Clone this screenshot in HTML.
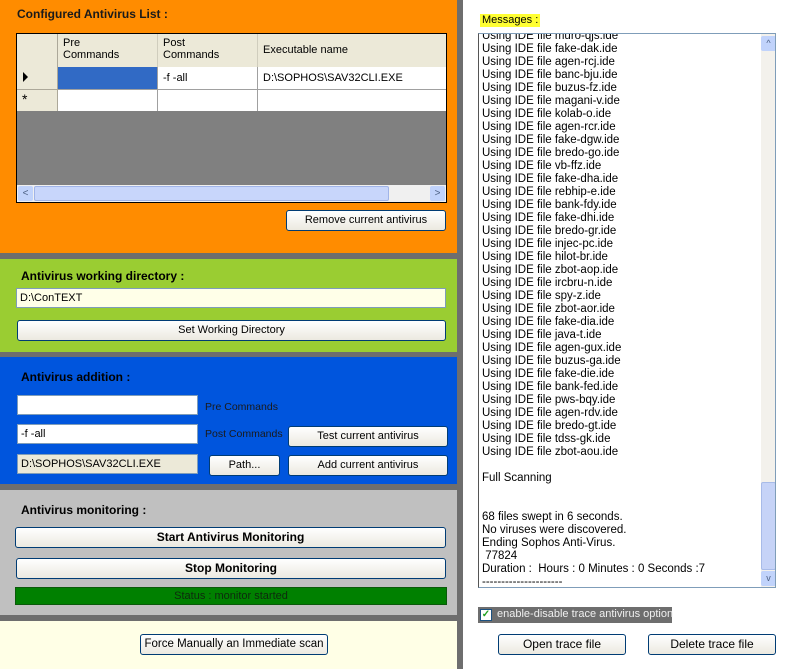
<!DOCTYPE html><html><head><style>
*{box-sizing:border-box;margin:0;padding:0}
body{width:793px;height:669px;position:relative;overflow:hidden;background:#fff;font-family:"Liberation Sans",sans-serif;font-size:11px;color:#000}
.a{position:absolute;white-space:nowrap}
.btn{position:absolute;background:linear-gradient(#fff,#ece9e0);border:1px solid #003c74;border-radius:3px;text-align:center;font-size:11px;line-height:18px;white-space:nowrap}
.b{font-weight:bold}
.tb{position:absolute;background:#fff;border:1px solid #7f9db9;font-size:11px;line-height:17px;padding-left:3px}
.ln{position:absolute;left:3px;font-size:11.5px;line-height:13px;white-space:nowrap}
</style></head><body>
<div class="a" style="left:0;top:0;width:463px;height:669px;background:#6e6e6e"></div>
<div class="a" style="left:0;top:0;width:457px;height:253px;background:#ff8c00"></div>
<div class="a b" style="left:17px;top:7px;font-size:12px;color:#1a1a1a">Configured Antivirus List :</div>
<div class="a" style="left:16px;top:33px;width:431px;height:170px;background:#808080;border:1px solid #000"></div>
<div class="a" style="left:17px;top:34px;width:429px;height:33px;background:#ece9d8"></div>
<div class="a" style="left:17px;top:34px;width:41px;height:77px;background:#ece9d8;border-right:1px solid #aca899"></div>
<div class="a" style="left:63px;top:37px;line-height:12px">Pre<br>Commands</div>
<div class="a" style="left:157px;top:34px;width:1px;height:33px;background:#d0cdbd"></div>
<div class="a" style="left:163px;top:37px;line-height:12px">Post<br>Commands</div>
<div class="a" style="left:257px;top:34px;width:1px;height:33px;background:#d0cdbd"></div>
<div class="a" style="left:263px;top:44px">Executable name</div>
<div class="a" style="left:58px;top:67px;width:388px;height:44px;background:#fff"></div>
<div class="a" style="left:58px;top:67px;width:99px;height:22px;background:#316ac5"></div>
<div class="a" style="left:58px;top:89px;width:388px;height:1px;background:#a0a0a0"></div>
<div class="a" style="left:157px;top:67px;width:1px;height:44px;background:#a0a0a0"></div>
<div class="a" style="left:257px;top:67px;width:1px;height:44px;background:#a0a0a0"></div>
<div class="a" style="left:17px;top:89px;width:41px;height:1px;background:#aca899"></div>
<div class="a" style="left:23px;top:72px;width:0;height:0;border-left:5px solid #000;border-top:5px solid transparent;border-bottom:5px solid transparent"></div>
<div class="a" style="left:22px;top:91px;font-size:14px">*</div>
<div class="a" style="left:163px;top:72px">-f -all</div>
<div class="a" style="left:263px;top:72px">D:\SOPHOS\SAV32CLI.EXE</div>
<div class="a" style="left:17px;top:185px;width:429px;height:17px;background:#f0f0f0"></div>
<div class="a" style="left:18px;top:186px;width:15px;height:15px;background:#c1d3fb;border-radius:2px;color:#4d6185;font-size:10px;text-align:center;line-height:15px">&lt;</div>
<div class="a" style="left:34px;top:186px;width:355px;height:15px;background:#c8d6fb;border:1px solid #a0b4e8;border-radius:2px"></div>
<div class="a" style="left:430px;top:186px;width:15px;height:15px;background:#c1d3fb;border-radius:2px;color:#4d6185;font-size:10px;text-align:center;line-height:15px">&gt;</div>
<div class="btn" style="left:286px;top:210px;width:160px;height:21px">Remove current antivirus</div>

<div class="a" style="left:0;top:259px;width:457px;height:93px;background:#9acd32"></div>
<div class="a b" style="left:21px;top:269px;font-size:12px">Antivirus working directory :</div>
<div class="tb" style="left:16px;top:288px;width:430px;height:20px;background:#ffffe8;line-height:18px">D:\ConTEXT</div>
<div class="btn" style="left:17px;top:320px;width:429px;height:21px">Set Working Directory</div>

<div class="a" style="left:0;top:357px;width:457px;height:127px;background:#0055dd"></div>
<div class="a b" style="left:21px;top:370px;font-size:12px">Antivirus addition :</div>
<div class="tb" style="left:17px;top:395px;width:181px;height:20px"></div>
<div class="a" style="left:205px;top:401px;color:#1a1a1a;font-size:10.5px">Pre Commands</div>
<div class="tb" style="left:17px;top:424px;width:181px;height:20px;line-height:19px">-f -all</div>
<div class="a" style="left:205px;top:428px;color:#1a1a1a;font-size:10.5px">Post Commands</div>
<div class="btn" style="left:288px;top:426px;width:160px;height:21px">Test current antivirus</div>
<div class="tb" style="left:17px;top:454px;width:181px;height:20px;background:#ece9d8;line-height:19px">D:\SOPHOS\SAV32CLI.EXE</div>
<div class="btn" style="left:209px;top:455px;width:71px;height:21px">Path...</div>
<div class="btn" style="left:288px;top:455px;width:160px;height:21px">Add current antivirus</div>

<div class="a" style="left:0;top:490px;width:457px;height:125px;background:#c0c0c0"></div>
<div class="a b" style="left:21px;top:503px;font-size:12px">Antivirus monitoring :</div>
<div class="btn b" style="left:15px;top:527px;width:431px;height:21px;font-size:12px">Start Antivirus Monitoring</div>
<div class="btn b" style="left:16px;top:558px;width:430px;height:21px;font-size:12px">Stop Monitoring</div>
<div class="a" style="left:15px;top:587px;width:432px;height:18px;background:#008000;border:1px solid #0a5a0a;text-align:center;line-height:16px;color:#0d2a0d">Status : monitor started</div>

<div class="a" style="left:0;top:621px;width:457px;height:48px;background:#ffffe6"></div>
<div class="btn" style="left:140px;top:634px;width:188px;height:21px;font-size:11.5px">Force Manually an Immediate scan</div>

<div class="a" style="left:480px;top:14px;background:#ffff33;padding:0 2px;line-height:13px">Messages :</div>
<div class="a" style="left:478px;top:33px;width:298px;height:555px;border:1px solid #7f9db9;border-left-color:#555;overflow:hidden;background:#fff">
<div id="m"></div>
<div class="a" style="left:282px;top:0;width:15px;height:553px;background:#f3f1ec"></div>
<div class="a" style="left:282px;top:2px;width:15px;height:15px;background:#c1d3fb;border-radius:2px;color:#4d6185;font-size:9px;text-align:center;line-height:15px">^</div>
<div class="a" style="left:282px;top:448px;width:15px;height:88px;background:#c6d3f7;border:1px solid #a8bbe8;border-radius:2px"></div>
<div class="a" style="left:282px;top:537px;width:15px;height:15px;background:#c1d3fb;border-radius:2px;color:#4d6185;font-size:9px;text-align:center;line-height:15px">v</div>
</div>
<div class="a" style="left:478px;top:607px;width:194px;height:16px;background:#6e6e6e"></div>
<div class="a" style="left:480px;top:609px;width:12px;height:12px;background:#fff;border:1px solid #1c5180;color:#21a121;font-size:10px;line-height:10px;text-align:center;font-weight:bold">✓</div>
<div class="a" style="left:497px;top:608px;color:#f0f0f0;font-size:11px">enable-disable trace antivirus option</div>
<div class="btn" style="left:498px;top:634px;width:128px;height:21px;font-size:12px">Open trace file</div>
<div class="btn" style="left:648px;top:634px;width:128px;height:21px;font-size:12px">Delete trace file</div>
<script>
var n="muro-qjs fake-dak agen-rcj banc-bju buzus-fz magani-v kolab-o agen-rcr fake-dgw bredo-go vb-ffz fake-dha rebhip-e bank-fdy fake-dhi bredo-gr injec-pc hilot-br zbot-aop ircbru-n spy-z zbot-aor fake-dia java-t agen-gux buzus-ga fake-die bank-fed pws-bqy agen-rdv bredo-gt tdss-gk zbot-aou".split(" ");
var h="",t=-4;
n.forEach(function(x){h+='<div class="ln" style="top:'+t+'px">Using IDE file '+x+'.ide</div>';t+=13});
var e=["","Full Scanning","","","68 files swept in 6 seconds.","No viruses were discovered.","Ending Sophos Anti-Virus."," 77824","Duration :  Hours : 0 Minutes : 0 Seconds :7","---------------------"];
e.forEach(function(x){h+='<div class="ln" style="top:'+t+'px;white-space:pre">'+x+'</div>';t+=13});
document.getElementById("m").innerHTML=h;
</script>
</body></html>
